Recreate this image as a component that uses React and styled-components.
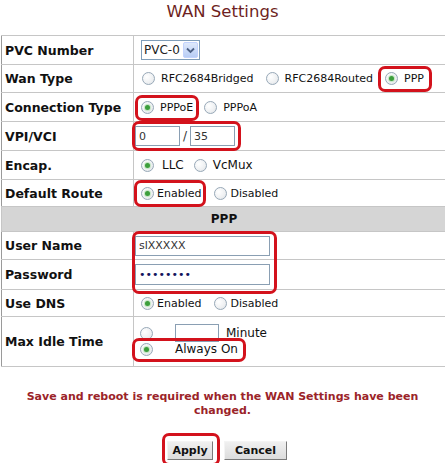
import React from 'react';
import styled, { createGlobalStyle } from 'styled-components';

const GlobalStyle = createGlobalStyle`
  html, body {
    margin: 0;
    padding: 0;
    background: #fff;
    overflow: hidden;
  }
  body {
    font-family: "DejaVu Sans", Verdana, sans-serif;
    color: #111;
  }
`;

const Page = styled.div`
  width: 445px;
  height: 463px;
  overflow: hidden;
`;

const Title = styled.h1`
  margin: 0;
  padding-top: 2px;
  height: 35px;
  box-sizing: border-box;
  text-align: center;
  font-size: 16.5px;
  line-height: 19px;
  font-weight: normal;
  color: #6e1f22;
`;

const Table = styled.table`
  width: 446px;
  margin-left: 1px;
  border-collapse: collapse;
  border-left: 1px solid #9a9a9a;
`;

const Row = styled.tr`
  height: ${p => p.$h || 29}px;
`;

const Label = styled.td`
  width: 128px;
  padding: 0 0 0 3px;
  border: 1px solid #c6c6c6;
  border-left-color: #9a9a9a;
  font-size: 12.5px;
  font-weight: bold;
  white-space: nowrap;
`;

const Value = styled.td`
  padding: 0 0 0 1px;
  border: 1px solid #c6c6c6;
  font-size: ${p => p.$size || 11}px;
`;

const Section = styled.td`
  background: #d5d5d5;
  border: 1px solid #c6c6c6;
  text-align: center;
  font-size: 12px;
  font-weight: bold;
`;

const Options = styled.div`
  display: flex;
  align-items: center;
`;

const Option = styled.span`
  display: inline-flex;
  align-items: center;
  margin-left: ${p => p.$before}px;
  white-space: nowrap;
`;

const RadioDot = styled.span`
  position: relative;
  display: inline-block;
  box-sizing: border-box;
  flex: none;
  width: 13px;
  height: 13px;
  margin-right: ${p => p.$gap}px;
  border: 1px solid #98a9b8;
  border-radius: 50%;
  background: radial-gradient(circle at 35% 35%, #ffffff 0, #eef0f2 60%, #d9dde1 100%);
  &::after {
    content: '';
    display: ${p => (p.$checked ? 'block' : 'none')};
    position: absolute;
    left: 3px;
    top: 3px;
    width: 5px;
    height: 5px;
    border-radius: 50%;
    background: #3c9e3c;
    box-shadow: 0 0 1px 1px #bfe3bf;
  }
`;

const Mark = styled.span`
  position: relative;
  display: inline-flex;
  align-items: center;
  margin-left: ${p => p.$before || 0}px;
  &::after {
    content: '';
    position: absolute;
    top: ${p => -p.$box[0]}px;
    right: ${p => -p.$box[1]}px;
    bottom: ${p => -p.$box[2]}px;
    left: ${p => -p.$box[3]}px;
    border: 3px solid #d3121c;
    border-radius: 7px;
    pointer-events: none;
  }
`;

const FakeSelect = styled.span`
  display: inline-flex;
  align-items: center;
  box-sizing: border-box;
  width: 59px;
  height: 20px;
  margin-left: 6px;
  padding-left: 2px;
  border: 1px solid #7f9db9;
  font-size: 12px;
  color: #222;
`;

const SelectText = styled.span`
  flex: 1;
`;

const SelectArrow = styled.span`
  display: flex;
  align-items: center;
  justify-content: center;
  width: 15px;
  height: 16px;
  margin-right: 1px;
  background: linear-gradient(#dfe9fb, #b8cdf5);
  border: 1px solid #c3d3fd;
  box-sizing: border-box;
  border-radius: 2px;
`;

const TextBox = styled.input`
  box-sizing: border-box;
  width: ${p => p.$w}px;
  height: ${p => p.$h || 20}px;
  margin: 0;
  padding: 0 3px;
  border: 1px solid #8a9fb3;
  font-family: "DejaVu Sans", Tahoma, sans-serif;
  font-size: 11px;
  color: ${p => (p.type === 'password' ? '#14145e' : '#333')};
  background: #fff;
  outline: none;
`;

const Slash = styled.span`
  margin: 0 3px;
  font-size: 12px;
  color: #333;
`;

const IdleGrid = styled.div`
  display: grid;
  grid-template-columns: 35px auto;
  row-gap: 5px;
  align-items: center;
  padding-left: 5px;
`;

const IdleLine = styled.span`
  display: inline-flex;
  align-items: center;
  font-size: 12px;
`;

const Unit = styled.span`
  margin-left: 7px;
`;

const Notice = styled.p`
  margin: 23px 0 0;
  text-align: center;
  font-size: 11px;
  line-height: 14px;
  font-weight: bold;
  color: #9b2429;
`;

const Buttons = styled.div`
  display: flex;
  justify-content: center;
  gap: 11px;
  margin-top: 23px;
  padding-left: 9px;
`;

const Button = styled.button`
  box-sizing: border-box;
  width: ${p => p.$w}px;
  height: 19px;
  padding: 0;
  border: 1px solid;
  border-color: #f4f4f4 #7a7a7a #7a7a7a #f4f4f4;
  background: linear-gradient(#f0f0f0, #dcdcdc);
  font-family: "DejaVu Sans", Verdana, sans-serif;
  font-size: 11px;
  font-weight: bold;
  color: #111;
`;

const Radio = ({ checked, gap = 6, children, before = 0 }) => (
  <Option $before={before}>
    <RadioDot $checked={checked} $gap={gap} />
    {children}
  </Option>
);

const Chevron = () => (
  <svg width="9" height="7" viewBox="0 0 9 7">
    <path d="M1 1.5 L4.5 5 L8 1.5" fill="none" stroke="#4d6185" strokeWidth="1.8" />
  </svg>
);

export default function App() {
  return (
    <Page>
      <GlobalStyle />
      <Title>WAN Settings</Title>
      <Table>
        <tbody>
          <Row $h={29}>
            <Label>PVC Number</Label>
            <Value>
              <FakeSelect>
                <SelectText>PVC-0</SelectText>
                <SelectArrow><Chevron /></SelectArrow>
              </FakeSelect>
            </Value>
          </Row>
          <Row $h={28}>
            <Label>Wan Type</Label>
            <Value>
              <Options>
                <Radio before={7}>RFC2684Bridged</Radio>
                <Radio before={12}>RFC2684Routed</Radio>
                <Mark $before={12} $box={[6, 8, 7, 7]}>
                  <Radio checked>PPP</Radio>
                </Mark>
              </Options>
            </Value>
          </Row>
          <Row $h={29}>
            <Label>Connection Type</Label>
            <Value>
              <Options>
                <Mark $before={6} $box={[6, 6, 7, 6]}>
                  <Radio checked>PPPoE</Radio>
                </Mark>
                <Radio before={11}>PPPoA</Radio>
              </Options>
            </Value>
          </Row>
          <Row $h={29}>
            <Label>VPI/VCI</Label>
            <Value>
              <Mark $box={[5, 6, 5, 3]}>
                <TextBox $w={45} value="0" readOnly />
                <Slash>/</Slash>
                <TextBox $w={45} value="35" readOnly />
              </Mark>
            </Value>
          </Row>
          <Row $h={29}>
            <Label>Encap.</Label>
            <Value $size={12}>
              <Options>
                <Radio before={6} gap={8} checked>LLC</Radio>
                <Radio before={10}>VcMux</Radio>
              </Options>
            </Value>
          </Row>
          <Row $h={27}>
            <Label>Default Route</Label>
            <Value>
              <Options>
                <Mark $before={6} $box={[7, 5, 7, 7]}>
                  <Radio gap={3} checked>Enabled</Radio>
                </Mark>
                <Radio before={13} gap={3}>Disabled</Radio>
              </Options>
            </Value>
          </Row>
          <Row $h={25}>
            <Section colSpan={2}>PPP</Section>
          </Row>
          <Row $h={28}>
            <Label>User Name</Label>
            <Value>
              <Mark $box={[5, 7, 38, 3]}>
                <TextBox $w={135} value="slXXXXX" readOnly />
              </Mark>
            </Value>
          </Row>
          <Row $h={30}>
            <Label>Password</Label>
            <Value>
              <TextBox $w={135} $h={21} type="password" value="12345678" readOnly />
            </Value>
          </Row>
          <Row $h={27}>
            <Label>Use DNS</Label>
            <Value>
              <Options>
                <Radio before={6} gap={3} checked>Enabled</Radio>
                <Radio before={13} gap={3}>Disabled</Radio>
              </Options>
            </Value>
          </Row>
          <Row $h={50}>
            <Label>Max Idle Time</Label>
            <Value>
              <IdleGrid>
                <RadioDot $gap={0} />
                <IdleLine>
                  <TextBox $w={44} $h={18} value="" readOnly />
                  <Unit>Minute</Unit>
                </IdleLine>
              </IdleGrid>
              <Mark $box={[4, 8, 6, 3]}>
                <IdleGrid>
                  <RadioDot $gap={0} $checked />
                  <IdleLine>Always On</IdleLine>
                </IdleGrid>
              </Mark>
            </Value>
          </Row>
        </tbody>
      </Table>
      <Notice>
        Save and reboot is required when the WAN Settings have been
        <br />
        changed.
      </Notice>
      <Buttons>
        <Mark $box={[8, 7, 6, 5]}>
          <Button $w={46}>Apply</Button>
        </Mark>
        <Button $w={63}>Cancel</Button>
      </Buttons>
    </Page>
  );
}
